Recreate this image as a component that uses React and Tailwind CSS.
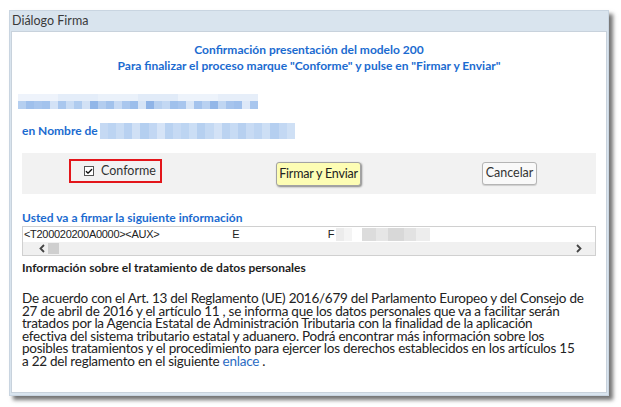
import { Check } from "lucide-react";

// bloques pixelados (datos ocultos)
const BLUR_TOP = ["bg-[#eef3fb]", "bg-[#e4edf9]", "bg-[#eaf1fa]", "bg-[#e1ebf8]", "bg-[#edf3fb]", "bg-[#e6eef9]"];
const BLUR_BOTTOM = [
  "bg-[#b5cff0]", "bg-[#9fc0ec]", "bg-[#a8c6ee]", "bg-[#a3c3ed]", "bg-[#d3e2f6]", "bg-[#a9c7ee]",
  "bg-[#c9dcf4]", "bg-[#b0ccef]", "bg-[#d2e1f5]", "bg-[#91b6e8]", "bg-[#b3cdef]", "bg-[#a2c2ec]",
  "bg-[#c7daf4]", "bg-[#aac7ee]", "bg-[#9cbeeb]", "bg-[#d6e4f6]", "bg-[#8fb4e7]", "bg-[#b7d0f0]",
  "bg-[#c3d8f3]", "bg-[#a0c1ec]", "bg-[#a8c6ee]", "bg-[#d9e6f7]", "bg-[#a4c3ed]", "bg-[#b9d1f1]",
  "bg-[#93b7e8]", "bg-[#c0d6f2]", "bg-[#a6c4ed]", "bg-[#a0c0ec]", "bg-[#dde8f8]", "bg-[#a8c6ee]",
];
const BLUR_NAME = [
  "bg-[#c5d9f3]", "bg-[#bcd4f2]", "bg-[#c9dcf4]", "bg-[#b8d1f1]", "bg-[#d0e0f5]", "bg-[#b4cff0]",
  "bg-[#c2d7f3]", "bg-[#d6e4f7]", "bg-[#b9d2f1]", "bg-[#c6daf4]", "bg-[#bdd5f2]", "bg-[#cbdef5]",
  "bg-[#b6d0f0]", "bg-[#c4d9f3]", "bg-[#d3e2f6]", "bg-[#bbd3f1]", "bg-[#c7dbf4]", "bg-[#b7d0f0]",
  "bg-[#c8dbf4]", "bg-[#bed5f2]", "bg-[#cddff5]", "bg-[#b5cff0]", "bg-[#c3d8f3]", "bg-[#cfe0f5]",
];

export default function App() {
  return (
    <div className="min-h-screen bg-white pt-[10px] pl-[9px] font-['Lato',sans-serif]">
      <div className="w-[600px] h-[386px] flex flex-col bg-[#d9e4ee] border border-[#c9d5e1] shadow-[4px_4px_4px_rgba(0,0,0,0.55)]">

        {/* TITULO */}
        <div className="h-[20px] pl-[2px] text-[12.5px] leading-[20px] text-[#3a3a3a]">Diálogo Firma</div>

        {/* PANEL */}
        <div className="flex-1 ml-[1px] mr-[1px] mb-[2px] bg-white border border-[#c8d2dc] px-[10px] flex flex-col">

          <div className="pt-[10px] text-center text-[#1b6bd0] font-bold text-[12px] leading-[16px]">
            <p>Confirmación presentación del modelo 200</p>
            <p>Para finalizar el proceso marque "Conforme" y pulse en "Firmar y Enviar"</p>
          </div>

          {/* datos ocultos */}
          <div className="mt-[20px] -ml-[4px] w-[240px] h-[15px] flex flex-col">
            <div className="flex h-[7px]">
              {BLUR_TOP.map((c, i) => (
                <div key={i} className={`flex-1 ${c}`} />
              ))}
            </div>
            <div className="flex h-[8px]">
              {BLUR_BOTTOM.map((c, i) => (
                <div key={i} className={`flex-1 ${c}`} />
              ))}
            </div>
          </div>

          <div className="mt-[14px] h-[16px] flex items-center">
            <span className="text-[12px] font-bold text-[#1b6bd0] leading-[16px]">en Nombre de</span>
            <div className="ml-[2px] w-[195px] h-[16px] flex">
              {BLUR_NAME.map((c, i) => (
                <div key={i} className={`flex-1 ${c}`} />
              ))}
            </div>
          </div>

          {/* BARRA DE ACCIONES */}
          <div className="mt-[14px] h-[41px] bg-[#f2f2f2] flex items-start">
            <div className="ml-[47px] mt-[6px] w-[93px] h-[24px] border-2 border-[#e3161b] flex items-center">
              <span className="ml-[13px] w-[10px] h-[10px] border border-[#555] bg-white flex items-center justify-center">
                <Check size={9} strokeWidth={4} className="text-[#111]" />
              </span>
              <span className="ml-[7px] text-[12.5px] text-[#333]">Conforme</span>
            </div>
            <button className="ml-[114px] mt-[9px] w-[85px] h-[24px] px-0 whitespace-nowrap rounded-[3px] border border-[#a3a3a3] bg-[#fdfdb4] shadow-[1px_1px_2px_rgba(0,0,0,0.45)] text-[12.5px] tracking-[-0.2px] text-[#222]">
              Firmar y Enviar
            </button>
            <button className="ml-[121px] mt-[9px] w-[55px] h-[23px] px-0 whitespace-nowrap rounded-[3px] border border-[#b5b5b5] bg-[#f9f9f9] shadow-[0_1px_1px_rgba(0,0,0,0.15)] text-[12.5px] text-[#333]">
              Cancelar
            </button>
          </div>

          <p className="mt-[16px] text-[12px] font-bold text-[#1b6bd0] leading-[16px]">
            Usted va a firmar la siguiente información
          </p>

          {/* CAJA CON SCROLL */}
          <div className="h-[30px] border border-[#d0d0d0] flex flex-col">
            <div className="h-[15px] flex items-center text-[11px] text-[#222] font-['Liberation_Sans',sans-serif] whitespace-nowrap">
              <span className="pl-[1px] tracking-[-0.3px]">&lt;T200020200A0000&gt;&lt;AUX&gt;</span>
              <span className="ml-[73px]">E</span>
              <span className="ml-[88px]">F</span>
              <div className="ml-[2px] flex h-[13px]">
                <div className="w-[8px] bg-[#ececec]" />
                <div className="w-[8px] bg-[#f4f4f4]" />
                <div className="w-[10px] bg-white" />
                <div className="w-[14px] bg-[#dcdcdc]" />
                <div className="w-[12px] bg-[#e6e6e6]" />
                <div className="w-[16px] bg-[#d8d8d8]" />
                <div className="w-[12px] bg-[#e2e2e2]" />
                <div className="w-[14px] bg-[#ededed]" />
              </div>
            </div>
            <div className="flex-1 bg-[#f0f0f0] flex items-center">
              <svg width="8" height="9" viewBox="0 0 8 9" className="ml-[15px]">
                <path d="M6 1 L2.5 4.5 L6 8" stroke="#444" strokeWidth="1.8" fill="none" />
              </svg>
              <div className="ml-[2px] w-[11px] h-[11px] bg-[#cfcfcf]" />
              <svg width="8" height="9" viewBox="0 0 8 9" className="ml-auto mr-[12px]">
                <path d="M2 1 L5.5 4.5 L2 8" stroke="#444" strokeWidth="1.8" fill="none" />
              </svg>
            </div>
          </div>

          <p className="mt-[4px] text-[12px] font-bold text-[#1e1e1e] leading-[16px]">
            Información sobre el tratamiento de datos personales
          </p>

          <p className="mt-[16px] text-[13.5px] leading-[12.5px] text-[#222] tracking-[-0.25px] whitespace-nowrap">
            De acuerdo con el Art. 13 del Reglamento (UE) 2016/679 del Parlamento Europeo y del Consejo de<br />
            27 de abril de 2016 y el artículo 11 , se informa que los datos personales que va a facilitar serán<br />
            tratados por la Agencia Estatal de Administración Tributaria con la finalidad de la aplicación<br />
            efectiva del sistema tributario estatal y aduanero. Podrá encontrar más información sobre los<br />
            posibles tratamientos y el procedimiento para ejercer los derechos establecidos en los artículos 15<br />
            a 22 del reglamento en el siguiente <a className="text-[#2a6bc3]">enlace</a> .
          </p>
        </div>
      </div>
    </div>
  );
}
